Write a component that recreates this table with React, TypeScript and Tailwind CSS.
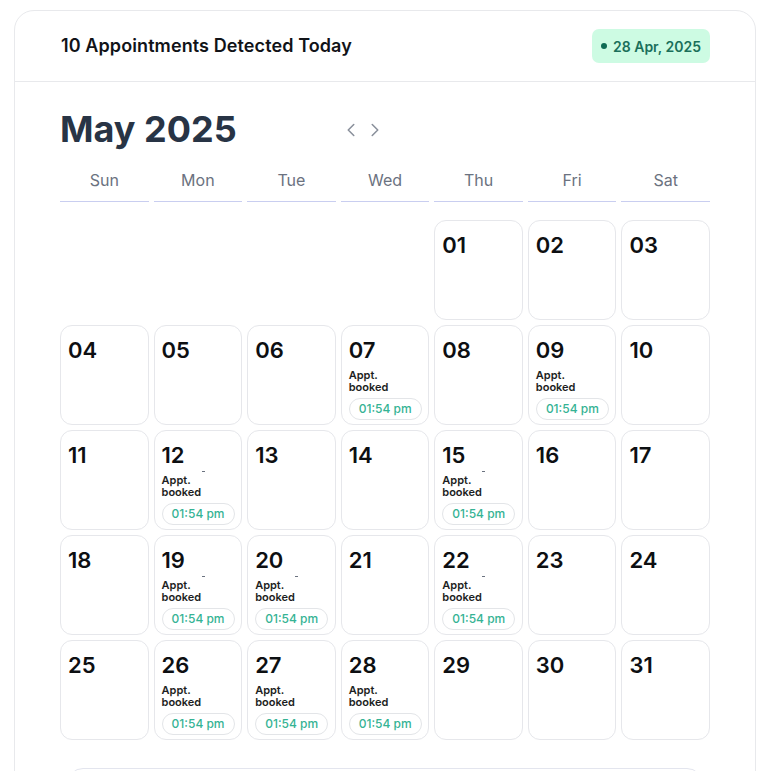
import React from "react";
import { ChevronLeft, ChevronRight } from "lucide-react";

const booked = new Set([7, 9, 12, 15, 19, 20, 22, 26, 27, 28]);
const dashed = new Set([12, 15, 19, 20, 22]);
const weekdays = ["Sun", "Mon", "Tue", "Wed", "Thu", "Fri", "Sat"];

function pad(n: number) {
  return n < 10 ? "0" + n : String(n);
}

export default function App() {
  const cells: (number | null)[] = [null, null, null, null];
  for (let d = 1; d <= 31; d++) cells.push(d);

  return (
    <div
      className="min-h-screen bg-white"
      style={{ fontFamily: "Inter, 'Noto Sans', sans-serif" }}
    >
      <div className="ml-[14px] mt-[10px] w-[742px] rounded-[20px] border border-[#e8e9ec] bg-white">
        <div className="flex h-[71px] items-center justify-between border-b border-[#e8e9ec] pl-[46px] pr-[45px]">
          <h1 className="-mt-[2px] text-[18px] font-semibold tracking-[0.1px] text-[#111318]">
            10 Appointments Detected Today
          </h1>
          <div className="flex h-[34px] items-center gap-[6px] rounded-[7px] bg-[#cdfbe3] pl-[9px] pr-[9px] text-[14px] font-semibold text-[#1a6f5a]">
            <span className="h-[6px] w-[6px] rounded-full bg-[#0f6b54]" />
            <span>28 Apr, 2025</span>
          </div>
        </div>

        <div className="px-[45px] pt-[27px] pb-[40px]">
          <div className="flex items-center">
            <h2 className="text-[36px] font-bold leading-[40px] text-[#283445]">
              May 2025
            </h2>
            <div className="ml-[103px] mt-[2px] flex items-center gap-[2px] text-[#8a909b]">
              <ChevronLeft size={22} strokeWidth={1.7} />
              <ChevronRight size={22} strokeWidth={1.7} />
            </div>
          </div>

          <div className="mt-[19px] grid grid-cols-7 gap-[5px]">
            {weekdays.map((w) => (
              <div
                key={w}
                className="border-b border-[#c9cef0] pb-[9px] text-center text-[16px] leading-[24px] text-[#6b7280]"
              >
                {w}
              </div>
            ))}
          </div>

          <div className="mt-[18px] grid grid-cols-7 gap-[5px]">
            {cells.map((d, i) =>
              d === null ? (
                <div key={i} className="h-[100px]" />
              ) : (
                <div
                  key={i}
                  className="relative flex h-[100px] flex-col rounded-[12px] border border-[#e6e7eb] px-[7px] pt-[10px]"
                >
                  <div className="text-[22px] font-semibold leading-[28px] text-[#0d0f12]">
                    {pad(d)}
                  </div>
                  {booked.has(d) && (
                    <>
                      <div className="mt-[5px] text-[11px] font-semibold leading-[12px] text-[#1c1e22]">
                        Appt.
                        <br />
                        booked
                      </div>
                      <div className="mt-[5px] flex h-[22px] w-[73px] items-center justify-center rounded-full border border-[#e3e5e8] text-[12px] font-medium text-[#35b394]">
                        01:54 pm
                      </div>
                    </>
                  )}
                  {dashed.has(d) && (
                    <span className="absolute left-[47px] top-[40px] h-px w-[3px] bg-[#6b7280]" />
                  )}
                </div>
              )
            )}
          </div>

          <div className="mx-[7px] mt-[28px] h-[60px] rounded-[16px] border border-[#e3e5ee]" />
        </div>
      </div>
    </div>
  );
}
